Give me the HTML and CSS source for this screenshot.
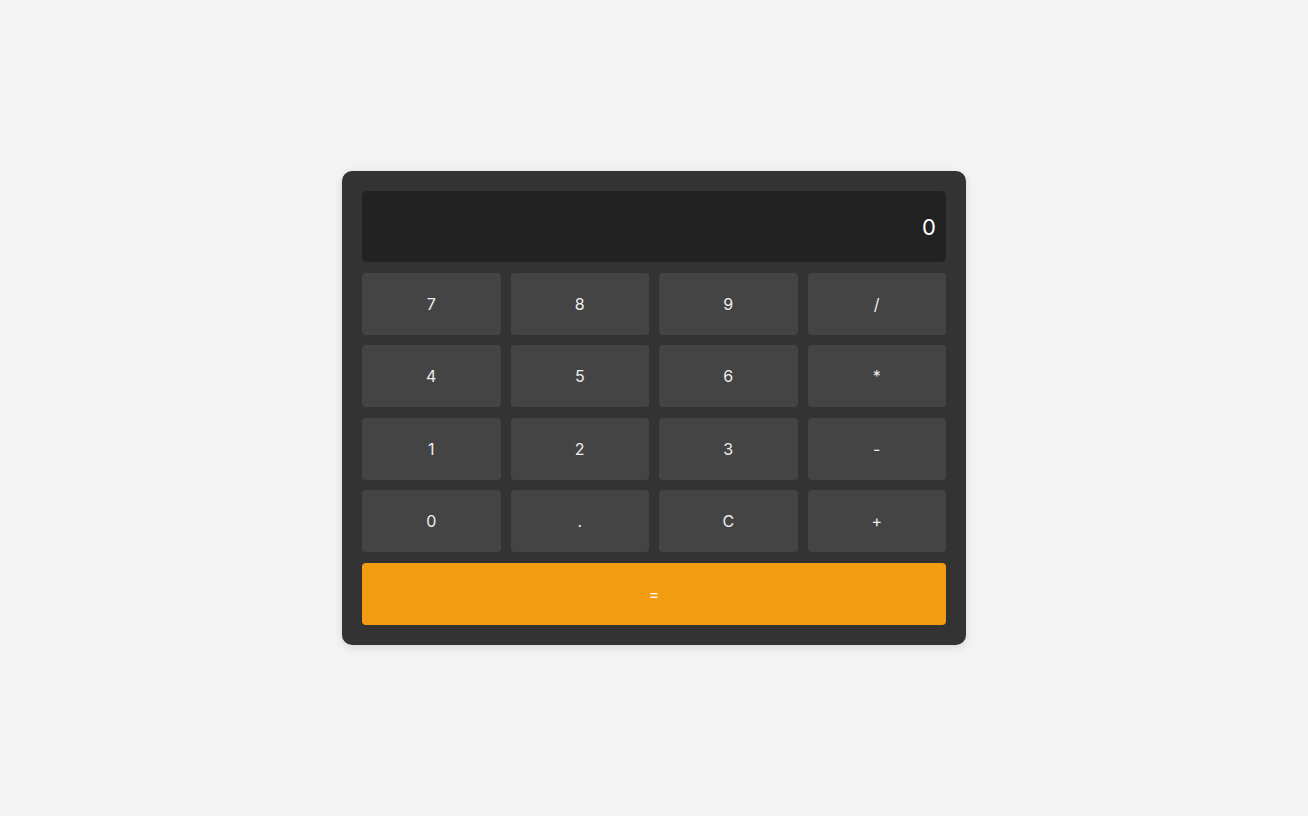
FILE: index.html
```html
<!DOCTYPE html>
<html lang="en">
<head>
<meta charset="utf-8">
<title>Calculator</title>
<link rel="stylesheet" href="styles.css">
</head>
<body>
<div class="calculator">
  <div class="display">0</div>
  <div class="keys">
    <button class="key">7</button>
    <button class="key">8</button>
    <button class="key">9</button>
    <button class="key">/</button>
    <button class="key">4</button>
    <button class="key">5</button>
    <button class="key">6</button>
    <button class="key">*</button>
    <button class="key">1</button>
    <button class="key">2</button>
    <button class="key">3</button>
    <button class="key">-</button>
    <button class="key">0</button>
    <button class="key">.</button>
    <button class="key">C</button>
    <button class="key">+</button>
    <button class="key equals">=</button>
  </div>
</div>
</body>
</html>
```
FILE: styles.css
```css
html, body {
  margin: 0;
  padding: 0;
}
body {
  background: #f3f3f3;
  height: 100vh;
  display: flex;
  align-items: center;
  justify-content: center;
  font-family: Inter, "Liberation Sans", sans-serif;
}
.calculator {
  width: 584px;
  padding: 20px;
  background: #333333;
  border-radius: 10px;
  box-shadow: 0 2px 8px rgba(0, 0, 0, 0.12);
  display: flex;
  flex-direction: column;
  gap: 10.5px;
}
.display {
  height: 71px;
  background: #222222;
  border-radius: 5px;
  color: #ffffff;
  font-size: 22px;
  display: flex;
  align-items: center;
  justify-content: flex-end;
  padding: 0 10px;
  box-sizing: border-box;
}
.keys {
  display: grid;
  grid-template-columns: repeat(4, 1fr);
  grid-auto-rows: 62px;
  gap: 10.5px 10px;
}
.key {
  border: none;
  margin: 0;
  background: #444444;
  color: #eeeeee;
  font-family: inherit;
  font-size: 16px;
  border-radius: 4px;
  padding: 0;
}
.equals {
  grid-column: 1 / -1;
  background: #f39c12;
  color: #ffffff;
}
```
